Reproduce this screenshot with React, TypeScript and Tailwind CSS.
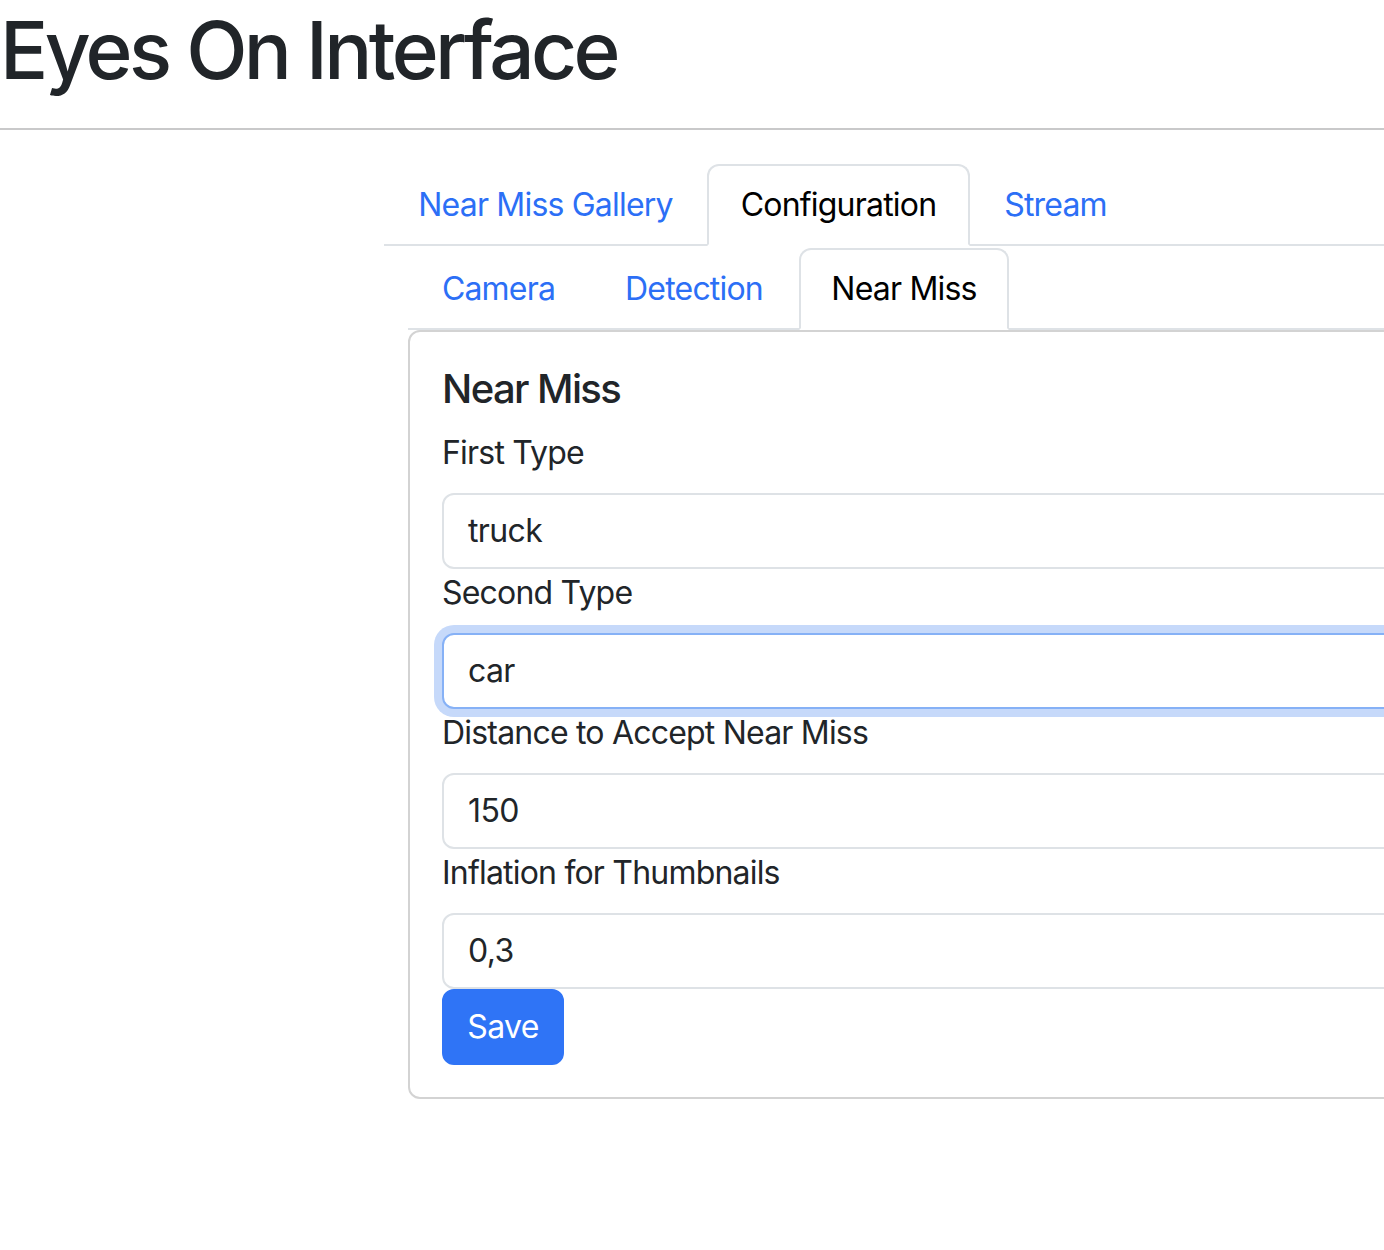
import React from "react";

const linkBlue = "text-[#2c6ff6]";

function Tab({ label, active, w }: { label: string; active?: boolean; w: string }) {
  return (
    <div
      className={
        "-mb-[2px] flex h-[82px] items-center justify-center rounded-t-[12px] border-2 text-[32px] leading-[48px] tracking-[-0.025em] " +
        w +
        " " +
        (active
          ? "border-[#dee2e6] border-b-white bg-white text-black"
          : "border-transparent " + linkBlue)
      }
    >
      {label}
    </div>
  );
}

function Field({ label, value, focused }: { label: string; value: string; focused?: boolean }) {
  return (
    <div className="flex flex-col">
      <label className="mb-[16px] text-[32px] leading-[48px] tracking-[-0.025em]">{label}</label>
      <div
        className={
          "flex h-[76px] items-center rounded-[12px] border-2 bg-white px-[24px] text-[32px] leading-[48px] tracking-[-0.02em] " +
          (focused
            ? "border-[#86b1f6] shadow-[0_0_0_8px_#c6d9fa]"
            : "border-[#dee2e6]")
        }
      >
        {value}
      </div>
    </div>
  );
}

export default function App() {
  return (
    <div className="h-[1250px] w-[1384px] overflow-hidden bg-white font-[Inter,sans-serif] text-[#212529]">
      <h1 className="m-0 pt-[2px] text-[80px] font-medium leading-[96px] tracking-[-0.045em]">
        Eyes On Interface
      </h1>
      <div className="mt-[30px] h-[2px] bg-[#c9c9ca]" />
      <div className="ml-[384px] mt-[34px] w-[1300px]">
        <div className="flex border-b-2 border-[#dee2e6]">
          <Tab label="Near Miss Gallery" w="w-[323px]" />
          <Tab label="Configuration" w="w-[263px]" active />
          <Tab label="Stream" w="w-[171px]" />
        </div>
        <div className="ml-[24px] mt-[2px]">
          <div className="flex border-b-2 border-[#dee2e6]">
            <Tab label="Camera" w="w-[181px]" />
            <Tab label="Detection" w="w-[210px]" />
            <Tab label="Near Miss" w="w-[210px]" active />
          </div>
          <div className="rounded-[12px] border-2 border-[#d3d3d3] px-[32px] pb-[32px] pt-[33px]">
            <h5 className="m-0 mb-[16px] text-[40px] font-medium leading-[48px] tracking-[-0.04em]">
              Near Miss
            </h5>
            <Field label="First Type" value="truck" />
            <Field label="Second Type" value="car" focused />
            <Field label="Distance to Accept Near Miss" value="150" />
            <Field label="Inflation for Thumbnails" value="0,3" />
            <button className="flex h-[76px] w-[122px] items-center justify-center rounded-[12px] border-2 border-[#2f74f6] bg-[#2f74f6] text-[32px] leading-[48px] tracking-[-0.02em] text-white">
              Save
            </button>
          </div>
        </div>
      </div>
    </div>
  );
}
